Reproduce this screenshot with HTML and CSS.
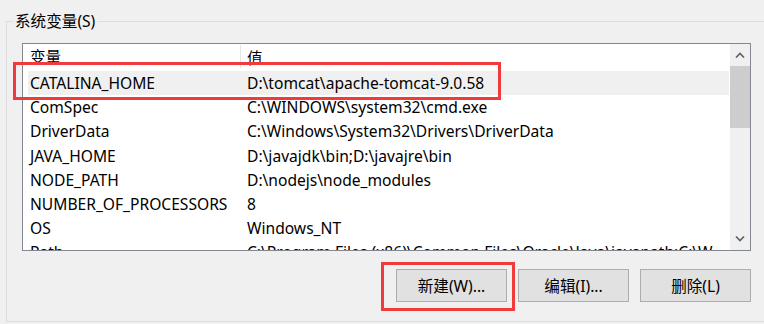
FILE: index.html
```html
<!DOCTYPE html>
<html lang="zh-CN">
<head>
    <meta charset="UTF-8">
    <title>系统变量</title>
    <link rel="stylesheet" href="styles.css">
</head>
<body>
    <fieldset class="group">
        <legend>系统变量(S)</legend>
        <div class="var-list">
            <div class="list-body">
                <div class="list-head">
                    <span class="col-name">变量</span>
                    <span class="col-value">值</span>
                </div>
                <div class="row selected"><span class="col-name">CATALINA_HOME</span><span class="col-value">D:\tomcat\apache-tomcat-9.0.58</span></div>
                <div class="row"><span class="col-name">ComSpec</span><span class="col-value">C:\WINDOWS\system32\cmd.exe</span></div>
                <div class="row"><span class="col-name">DriverData</span><span class="col-value">C:\Windows\System32\Drivers\DriverData</span></div>
                <div class="row"><span class="col-name">JAVA_HOME</span><span class="col-value">D:\javajdk\bin;D:\javajre\bin</span></div>
                <div class="row"><span class="col-name">NODE_PATH</span><span class="col-value">D:\nodejs\node_modules</span></div>
                <div class="row"><span class="col-name">NUMBER_OF_PROCESSORS</span><span class="col-value">8</span></div>
                <div class="row"><span class="col-name">OS</span><span class="col-value">Windows_NT</span></div>
                <div class="row"><span class="col-name">Path</span><span class="col-value">C:\Program Files (x86)\Common Files\Oracle\Java\javapath;C:\W</span></div>
            </div>
            <div class="scrollbar">
                <div class="arrow">
                    <svg width="10" height="6" viewBox="0 0 10 6"><path d="M1 5.5 L5 1.5 L9 5.5" fill="none" stroke="#606060" stroke-width="1.6"/></svg>
                </div>
                <div class="thumb"></div>
                <div class="track"></div>
                <div class="arrow">
                    <svg width="10" height="6" viewBox="0 0 10 6"><path d="M1 0.5 L5 4.5 L9 0.5" fill="none" stroke="#606060" stroke-width="1.6"/></svg>
                </div>
            </div>
        </div>
        <div class="buttons">
            <button>新建(W)...</button>
            <button>编辑(I)...</button>
            <button>删除(L)</button>
        </div>
    </fieldset>

    <div class="mark mark-row"></div>
    <div class="mark mark-button"></div>
</body>
</html>
```

FILE: styles.css
```css
body {
    margin: 0;
    background: #f0f0f0;
    font-family: "Noto Sans", "Noto Sans CJK SC", sans-serif;
    font-size: 15.6px;
    color: #000;
    overflow: hidden;
}

.group {
    margin: 11px 0 0 6px;
    padding: 0 0 19px 15px;
    border: 1px solid #dcdcdc;
    border-right: none;
}
.group legend {
    margin-left: -9px;
    padding: 0 2px;
    line-height: 20px;
}

.var-list {
    margin-top: 12px;
    width: 727px;
    height: 206px;
    border: 1px solid #828790;
    background: #fff;
    display: flex;
}
.list-body {
    width: 706px;
    overflow: hidden;
}
.list-head {
    height: 27px;
    display: flex;
    align-items: center;
    padding-left: 5px;
}
.list-head .col-name {
    height: 23px;
    align-self: flex-start;
    display: flex;
    align-items: center;
    margin-top: 1px;
    border-right: 1px solid #e5e5e5;
    width: 210px;
}
.list-head .col-value {
    padding-left: 6px;
}
.row {
    height: 24.2px;
    margin-left: 5px;
    display: flex;
    align-items: center;
    white-space: nowrap;
}
.row.selected {
    background: #f0f0f0;
}
.col-name {
    width: 215px;
    padding-left: 2px;
    flex-shrink: 0;
}
.col-value {
    padding-left: 2px;
}

.scrollbar {
    width: 20px;
    margin-left: 1px;
    background: #f0f0f0;
    display: flex;
    flex-direction: column;
}
.scrollbar .arrow {
    height: 22px;
    display: flex;
    align-items: center;
    justify-content: center;
}
.scrollbar .thumb {
    height: 62px;
    background: #cdcdcd;
}
.scrollbar .track {
    flex: 1;
}

.buttons {
    margin-top: 18px;
    width: 729px;
    display: flex;
    justify-content: flex-end;
    gap: 11px;
}
.buttons button {
    width: 111px;
    height: 33px;
    background: #e1e1e1;
    border: 1px solid #adadad;
    font: inherit;
    color: #000;
    padding: 0;
}

.mark {
    position: absolute;
    border: 3px solid #f03a3c;
    box-sizing: border-box;
}
.mark-row {
    left: 13px;
    top: 62px;
    width: 488px;
    height: 38px;
}
.mark-button {
    left: 381px;
    top: 262px;
    width: 134px;
    height: 49px;
}
```
